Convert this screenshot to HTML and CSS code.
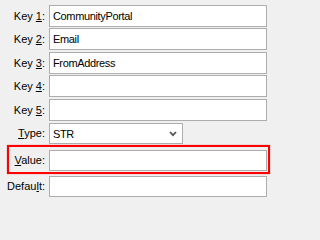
FILE: index.html
```html
<!DOCTYPE html>
<html>
<head>
<meta charset="utf-8">
<link rel="stylesheet" href="styles.css">
</head>
<body>
<div class="form">
  <div class="row g1"><span class="lbl">Key <u>1</u>:</span><input class="field" type="text" value="CommunityPortal"></div>
  <div class="row"><span class="lbl">Key <u>2</u>:</span><input class="field" type="text" value="Email"></div>
  <div class="row g1"><span class="lbl">Key <u>3</u>:</span><input class="field" type="text" value="FromAddress"></div>
  <div class="row"><span class="lbl">Key <u>4</u>:</span><input class="field" type="text" value=""></div>
  <div class="row"><span class="lbl">Key <u>5</u>:</span><input class="field" type="text" value=""></div>
  <div class="row short g1"><span class="lbl"><u>T</u>ype:</span>
    <div class="select"><span>STR</span><svg class="chev" width="8" height="6" viewBox="0 0 8 6"><path d="M1 1 L4 4.2 L7 1" fill="none" stroke="#555" stroke-width="1.8"/></svg></div>
  </div>
  <div class="highlight">
    <div class="row short inner"><span class="lbl"><u>V</u>alue:</span><input class="field" type="text" value=""></div>
  </div>
  <div class="row short"><span class="lbl">Defau<u>l</u>t:</span><input class="field" type="text" value=""></div>
</div>
</body>
</html>
```
FILE: styles.css
```css
html, body {
  margin: 0;
  padding: 0;
  background: #f0f0f0;
}
body {
  font: 11px "Liberation Sans", Arial, sans-serif;
  color: #000;
  width: 271px;
  height: 202px;
  overflow: hidden;
}
.form {
  display: flex;
  flex-direction: column;
  padding-top: 5px;
}
.row {
  display: grid;
  grid-template-columns: 45px 218px;
  column-gap: 4px;
  height: 22px;
  margin-bottom: 2px;
  align-items: center;
}
.row.g1 {
  margin-bottom: 1px;
}
.row.short {
  height: 21px;
}
.lbl {
  text-align: right;
  white-space: nowrap;
  line-height: 13px;
}
.lbl u {
  text-decoration-thickness: 1px;
  text-underline-offset: 1px;
}
.field {
  box-sizing: border-box;
  height: 100%;
  width: 218px;
  margin: 0;
  border: 1px solid #adadad;
  background: #fff;
  padding: 0 3px;
  font: inherit;
  letter-spacing: -0.35px;
  color: #000;
  outline: none;
}
.select {
  box-sizing: border-box;
  height: 21px;
  width: 134px;
  border: 1px solid #adadad;
  background: #fff;
  display: flex;
  align-items: center;
  justify-content: space-between;
  padding: 0 5px 0 3px;
  letter-spacing: -0.35px;
}
.chev {
  display: block;
  margin-top: 1px;
}
.highlight {
  box-sizing: border-box;
  margin-left: 7px;
  width: 263px;
  height: 29px;
  border: 2px solid #f00;
  box-shadow: 0 0 1px rgba(255, 0, 0, 0.6);
  padding-top: 3px;
  margin-bottom: 2px;
}
.row.inner {
  grid-template-columns: 36px 218px;
  margin-bottom: 0;
}
```
